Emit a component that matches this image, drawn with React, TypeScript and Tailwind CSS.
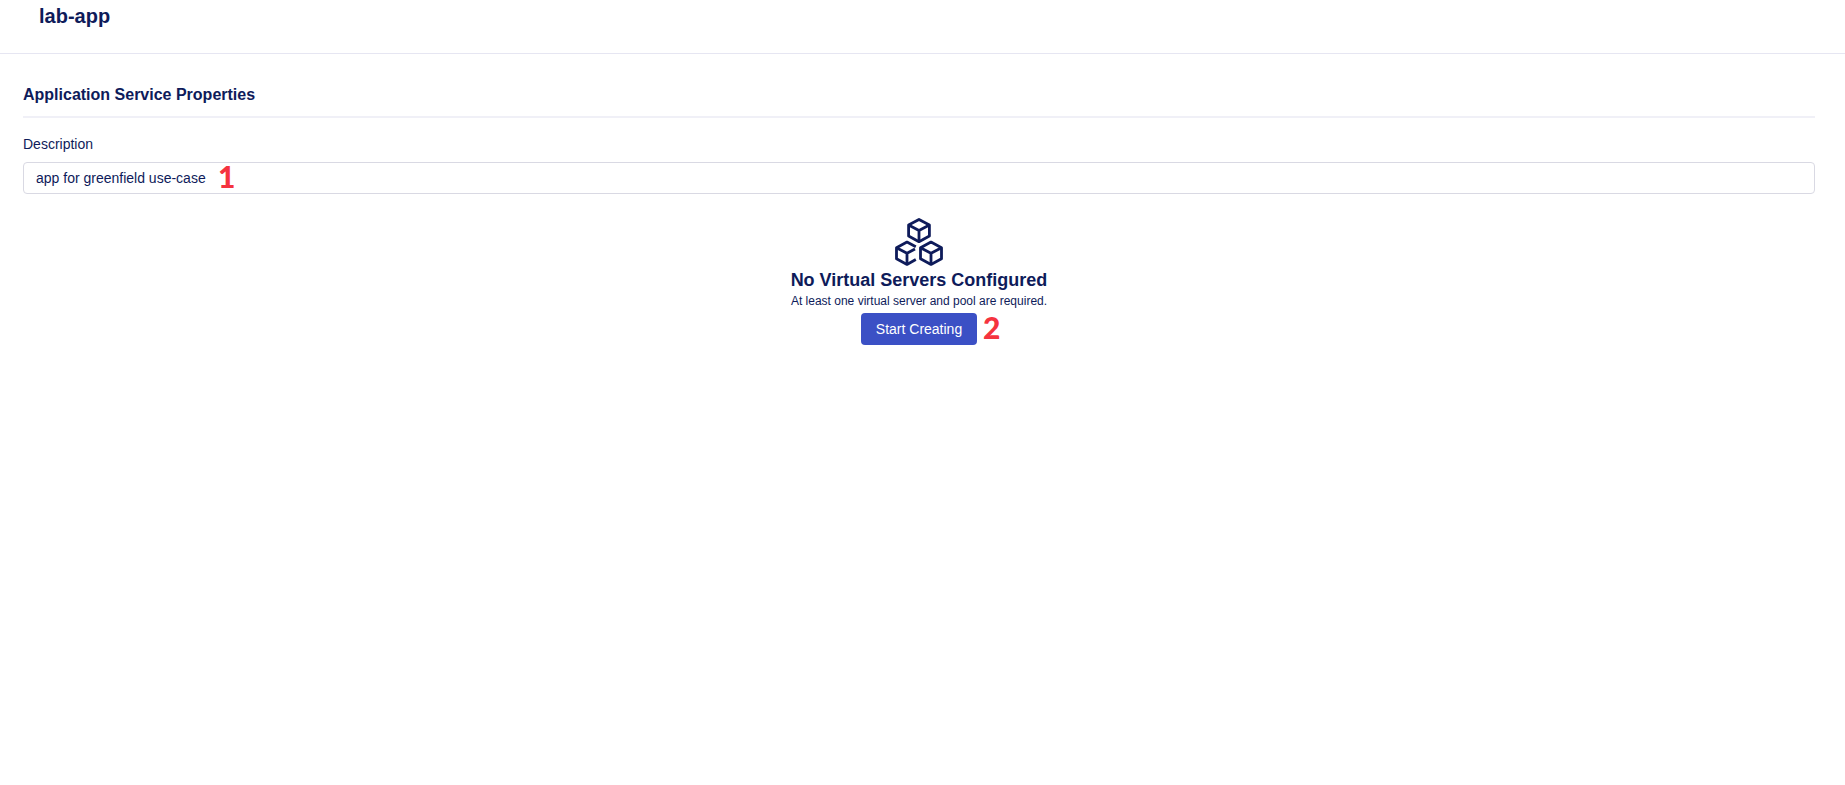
import { useState } from "react";

function CubesIcon() {
  return (
    <svg
      className="size-12 text-[#0e1b5a]"
      viewBox="0 0 48 48"
      fill="none"
      stroke="currentColor"
      strokeWidth="2.8"
      strokeLinejoin="round"
      strokeLinecap="butt"
      aria-hidden="true"
    >
      <path d="M24 1.5 34.4 7v11L24 23.7 13.6 18V7z" />
      <path d="M13.6 7 24 12.5 34.4 7M24 12.5v11" />
      <path d="M36 24.1 46.5 29.7v11L36 46.4l-10.5-5.7v-11z" />
      <path d="M25.5 29.7 36 35.3l10.5-5.6M36 35.3v11" />
      <path d="M20.8 28.7 12 24.1 1.5 29.7v11L12 46.4l8.8-4.8" />
      <path d="M1.5 29.7 12 35.3l8-4.3M12 35.3v11" />
    </svg>
  );
}

export default function App() {
  const [description, setDescription] = useState("app for greenfield use-case");

  return (
    <div className="min-h-screen bg-white font-['Liberation_Sans',Arial,sans-serif] text-[#0e1b5a]">
      <header className="border-b border-[#e6e6f2] px-[39px] pt-1 pb-[25px]">
        <h1 className="text-xl leading-6 font-bold">lab-app</h1>
      </header>

      <main className="pt-[27px] pr-[30px] pl-[23px]">
        <h2 className="border-b-2 border-[#f0f0f7] pt-1 pb-[11px] text-base leading-5 font-bold">
          Application Service Properties
        </h2>

        <div className="pt-4">
          <label htmlFor="description" className="block text-sm leading-5">
            Description
          </label>
          <div className="relative mt-2">
            <input
              id="description"
              type="text"
              value={description}
              onChange={(e) => setDescription(e.target.value)}
              className="block h-8 w-full rounded border border-[#d9d9e3] bg-white px-3 text-sm"
            />
            <span className="pointer-events-none absolute top-0 left-[195px] font-['Lato',sans-serif] text-3xl leading-7 font-black text-[#f5333f]">
              1
            </span>
          </div>
        </div>

        <section className="mt-6 flex flex-col items-center">
          <CubesIcon />
          <h3 className="mt-0.5 text-lg leading-6 font-bold">No Virtual Servers Configured</h3>
          <p className="mb-[3px] text-xs leading-[18px]">
            At least one virtual server and pool are required.
          </p>
          <div className="relative">
            <button type="button" className="h-8 w-[116px] rounded bg-[#3b50c5] text-sm text-white">
              Start Creating
            </button>
            <span className="pointer-events-none absolute top-0 left-full ml-1.5 font-['Lato',sans-serif] text-3xl leading-7 font-black text-[#f5333f]">
              2
            </span>
          </div>
        </section>
      </main>
    </div>
  );
}
